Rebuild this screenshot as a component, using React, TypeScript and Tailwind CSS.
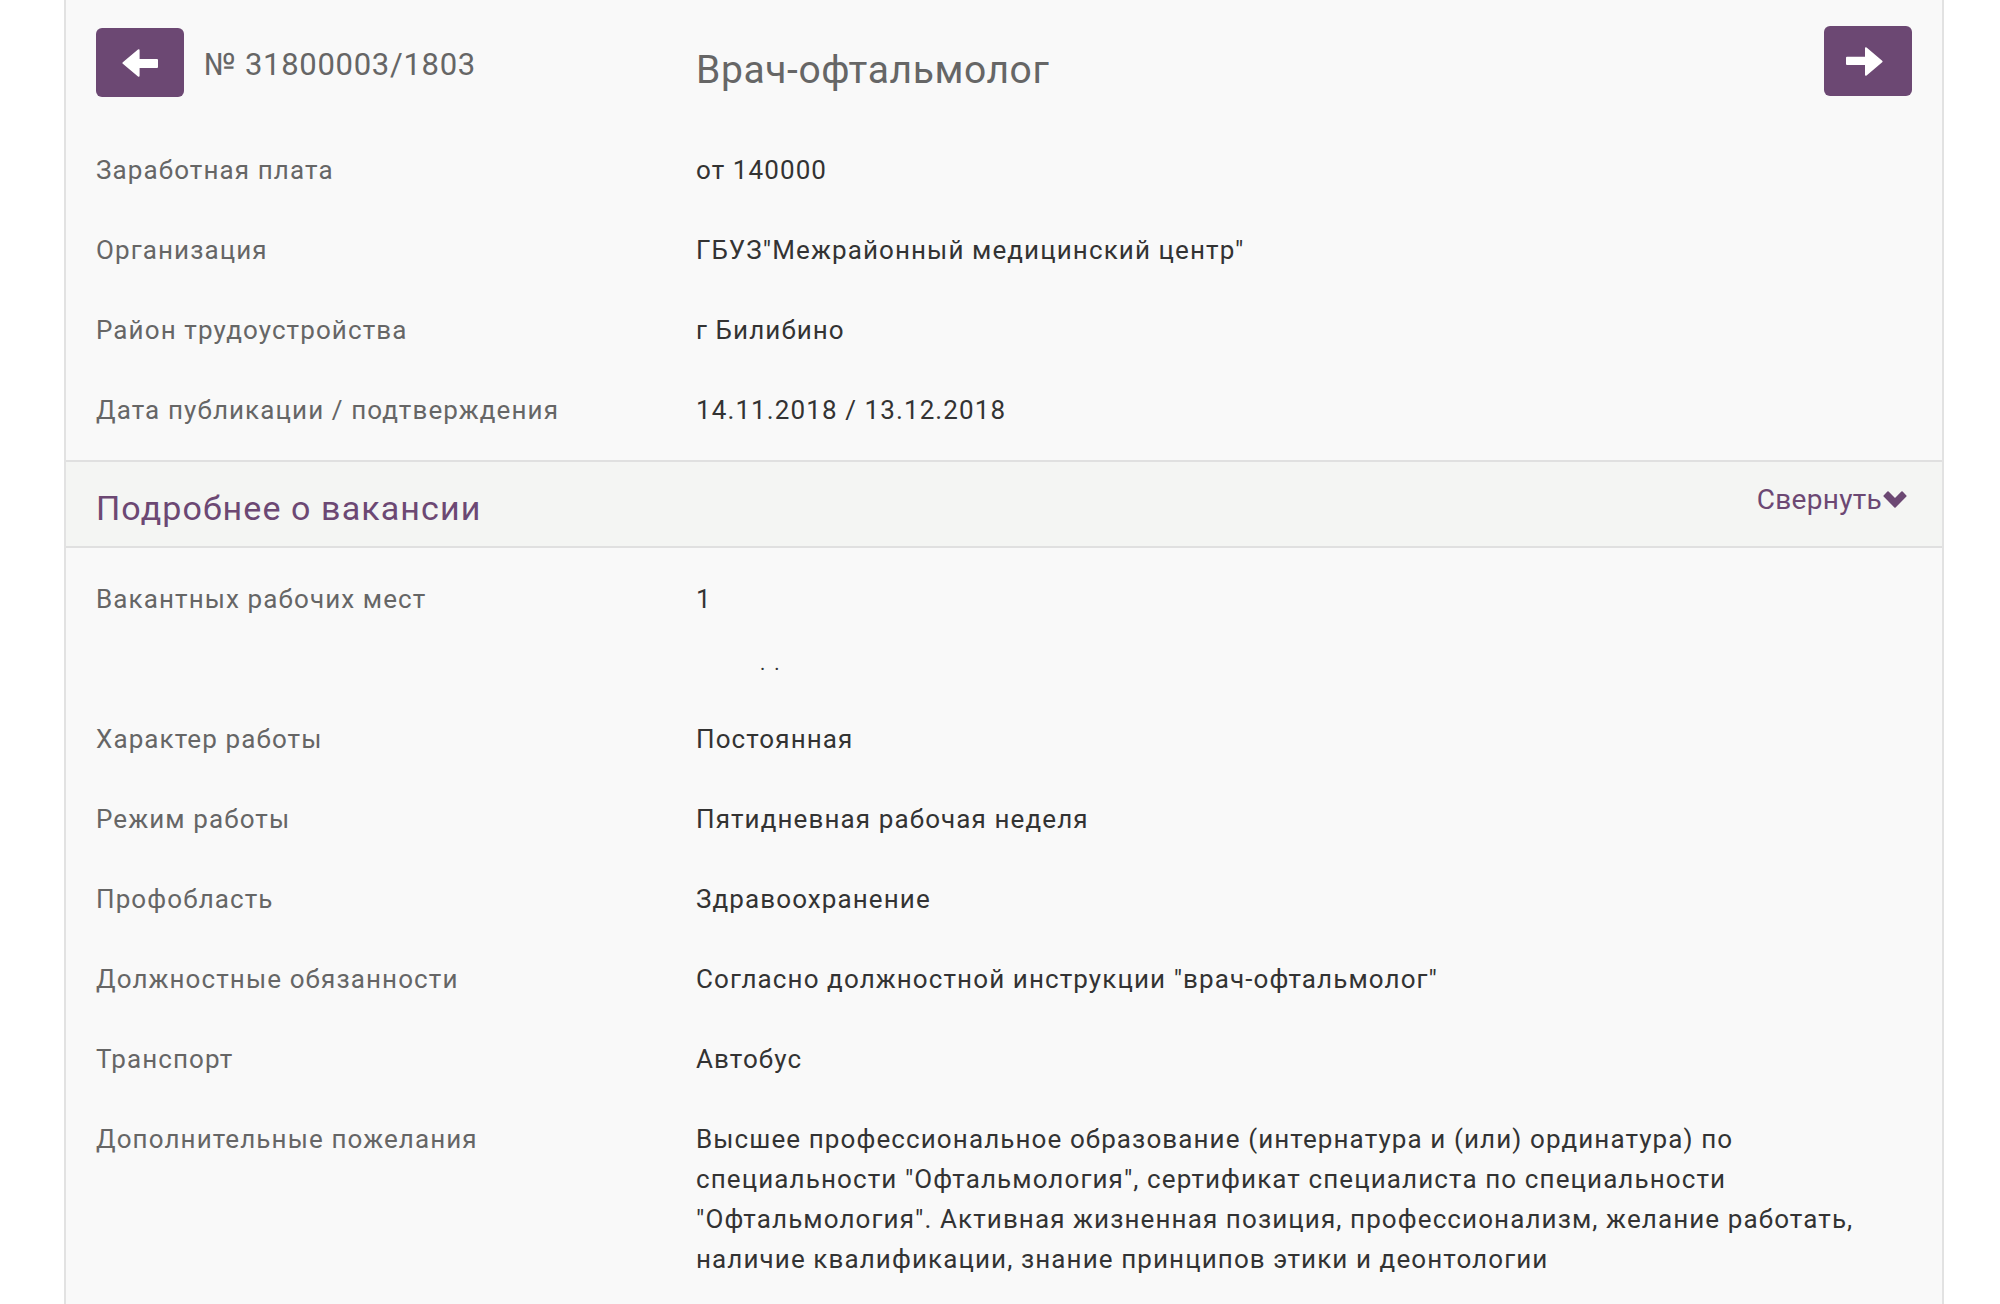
import React from "react";

type Row = { label: string; value: React.ReactNode };

const MAIN: Row[] = [
  { label: "Заработная плата", value: "от 140000" },
  { label: "Организация", value: "ГБУЗ\"Межрайонный медицинский центр\"" },
  { label: "Район трудоустройства", value: "г Билибино" },
  { label: "Дата публикации / подтверждения", value: "14.11.2018 / 13.12.2018" },
];

const DETAILS: Row[] = [
  { label: "Характер работы", value: "Постоянная" },
  { label: "Режим работы", value: "Пятидневная рабочая неделя" },
  { label: "Профобласть", value: "Здравоохранение" },
  { label: "Должностные обязанности", value: "Согласно должностной инструкции \"врач-офтальмолог\"" },
  { label: "Транспорт", value: "Автобус" },
  {
    label: "Дополнительные пожелания",
    value:
      "Высшее профессиональное образование (интернатура и (или) ординатура) по специальности \"Офтальмология\", сертификат специалиста по специальности \"Офтальмология\". Активная жизненная позиция, профессионализм, желание работать, наличие квалификации, знание принципов этики и деонтологии",
  },
];

function InfoRow({ label, value }: Row) {
  return (
    <div className="grid grid-cols-[600px_1184px] py-[20px] text-[26px] leading-[40px] tracking-[1.1px]">
      <div className="text-[#666666]">{label}</div>
      <div className="text-[#333333]">{value}</div>
    </div>
  );
}

function ArrowLeft() {
  return (
    <svg width="36" height="28" viewBox="0 0 36 28" fill="#ffffff">
      <path d="M0.8 13.2 L16 0.6 Q17.6 -0.4 17.6 1.6 L17.6 10 L35 10 Q36 10 36 11 L36 18 Q36 19 35 19 L17.6 19 L17.6 26.4 Q17.6 28.4 16 27.4 L0.8 14.8 Q0 14 0.8 13.2 Z" />
    </svg>
  );
}

function ArrowRight() {
  return (
    <svg width="37" height="29" viewBox="0 0 37 29" fill="#ffffff">
      <path d="M36.2 13.7 L20.6 0.6 Q19 -0.4 19 1.6 L19 9.7 L1 9.7 Q0 9.7 0 10.7 L0 17 Q0 18 1 18 L19 18 L19 27.4 Q19 29.4 20.6 28.4 L36.2 15.3 Q37 14.5 36.2 13.7 Z" />
    </svg>
  );
}

function Chevron() {
  return (
    <svg width="24" height="17" viewBox="0 0 24 17" fill="#6c4873">
      <path d="M0.6 4.4 L4.4 0.6 Q5 0 5.6 0.6 L12 7 L18.4 0.6 Q19 0 19.6 0.6 L23.4 4.4 Q24 5 23.4 5.6 L12.6 16.4 Q12 17 11.4 16.4 L0.6 5.6 Q0 5 0.6 4.4 Z" />
    </svg>
  );
}

export default function App() {
  return (
    <div className="min-h-screen bg-white font-['Roboto','Noto_Sans',sans-serif]">
      <div className="ml-[64px] w-[1880px] min-h-[1304px] border-x-2 border-[#e2e2e2] bg-[#f9f9f9]">
        <div className="px-[30px] pb-[10px] border-b-2 border-[#e0e0e0]">
          <div className="grid grid-cols-[600px_1fr] h-[130px]">
            <div className="flex items-start">
              <button className="mt-[28px] flex h-[69px] w-[88px] items-center justify-center rounded-[6px] bg-[#6c4873]">
                <ArrowLeft />
              </button>
              <span className="ml-[20px] mt-[45px] text-[31px] leading-[40px] tracking-[0.7px] text-[#666666]">№ 31800003/1803</span>
            </div>
            <div className="flex items-start justify-between">
              <h1 className="mt-[46px] text-[39px] leading-[48px] tracking-[0.6px] text-[#666666] font-normal">Врач-офтальмолог</h1>
              <button className="mt-[26px] flex h-[70px] w-[88px] items-center justify-center rounded-[6px] bg-[#6c4873] pr-[8px]">
                <ArrowRight />
              </button>
            </div>
          </div>
          {MAIN.map(r => (
            <InfoRow key={r.label} {...r} />
          ))}
        </div>

        <div className="flex h-[86px] items-center justify-between border-b-2 border-[#e0e0e0] bg-[#f4f5f3] pl-[30px] pr-[35px]">
          <span className="pt-[8px] text-[34px] leading-[40px] tracking-[1.1px] text-[#6c4873]">Подробнее о вакансии</span>
          <span className="flex items-center pb-[8px] text-[28px] leading-[36px] tracking-[0.3px] text-[#6c4873]">
            Свернуть
            <span className="ml-[1px] -mt-[2px]"><Chevron /></span>
          </span>
        </div>

        <div className="px-[30px] pt-[11px] pb-[20px]">
          <InfoRow label="Вакантных рабочих мест" value="1" />
          <div className="grid grid-cols-[600px_1fr] h-[60px]">
            <div />
            <div className="pl-[64px] pt-[14px] text-[20px] leading-[20px] tracking-[2px] text-[#333333]">. .</div>
          </div>
          {DETAILS.map(r => (
            <InfoRow key={r.label} {...r} />
          ))}
        </div>
      </div>
    </div>
  );
}
